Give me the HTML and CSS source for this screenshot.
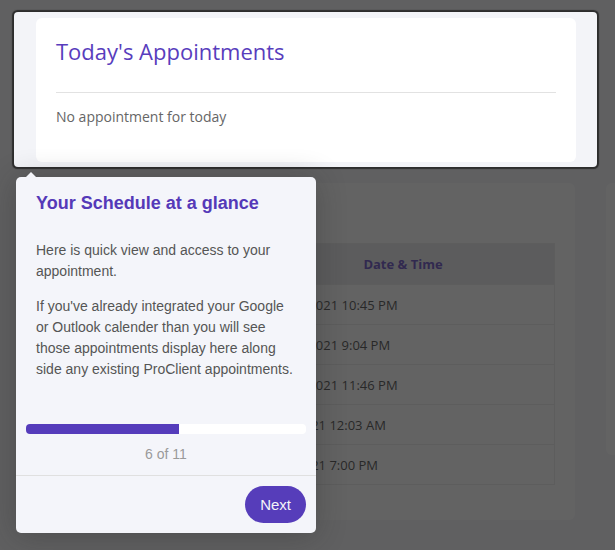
FILE: index.html
```html
<!DOCTYPE html>
<html lang="en">
<head>
    <meta charset="UTF-8">
    <meta name="viewport" content="width=device-width, initial-scale=1.0">
    <title>Dashboard - Appointments</title>
    <link rel="stylesheet" href="styles.css">
</head>
<body>

    <div class="page">
        <section class="today-wrap">
            <div class="card today">
                <h2 class="card-title">Today's Appointments</h2>
                <hr class="divider">
                <p class="empty">No appointment for today</p>
            </div>
        </section>

        <div class="lower">
            <div class="card upcoming">
                <div class="card-head"></div>
                <table class="appt-table">
                    <thead>
                        <tr><th class="col-client"></th><th>Date &amp; Time</th></tr>
                    </thead>
                    <tbody>
                        <tr><td></td><td>Jun 28, 2021 10:45 PM</td></tr>
                        <tr><td></td><td>Jun 29, 2021 9:04 PM</td></tr>
                        <tr><td></td><td>Jun 30, 2021 11:46 PM</td></tr>
                        <tr><td></td><td>Jul 1, 2021 12:03 AM</td></tr>
                        <tr><td></td><td>Jul 2, 2021 7:00 PM</td></tr>
                    </tbody>
                </table>
            </div>
            <div class="card side"></div>
        </div>
    </div>

    <div class="tour-tip">
        <div class="tip-header">
            <h3 class="tip-title">Your Schedule at a glance</h3>
        </div>
        <div class="tip-text">
            <p>Here is quick view and access to your appointment.</p>
            <p>If you've already integrated your Google or Outlook calender than you will see those appointments display here along side any existing ProClient appointments.</p>
        </div>
        <div class="tip-progress"><div class="tip-progress-bar" style="width: 54.55%"></div></div>
        <div class="tip-count">6 of 11</div>
        <div class="tip-buttons">
            <button class="btn-next">Next</button>
        </div>
    </div>

</body>
</html>
```

FILE: styles.css
```css
html, body {
    margin: 0;
}
body {
    background: #f3f4f8;
    font-family: 'Open Sans', sans-serif;
    color: #333;
    height: 550px;
    overflow: hidden;
}
.page {
    padding: 12px 18px 0 14px;
}
.today-wrap {
    position: relative;
    z-index: 2;
    height: 155px;
    box-sizing: border-box;
    padding: 6px 21px 5px 22px;
    background: #f3f4f8;
    border-radius: 4px;
    box-shadow: 0 0 1px 1.5px rgba(33,33,33,0.8), 0 0 0 5000px rgba(33,33,33,0.7);
}
.card {
    background: #fff;
    border-radius: 6px;
}
.today {
    height: 144px;
    box-sizing: border-box;
    padding: 20px 20px 0;
}
.card-title {
    margin: 0;
    font-size: 22px;
    font-weight: 400;
    line-height: 1.2;
    color: #583dbd;
}
.divider {
    border: none;
    border-top: 1px solid #e2e2e2;
    margin: 28px 0 13px;
}
.empty {
    margin: 0;
    font-size: 14px;
    line-height: 21px;
    color: #666;
}
.lower {
    display: flex;
    gap: 31px;
    margin: 16px 0 0 22px;
    width: 800px;
}
.upcoming {
    width: 539px;
    height: 337px;
    box-sizing: border-box;
    padding: 20px;
    flex-shrink: 0;
}
.card-head {
    height: 40px;
}
.side {
    width: 200px;
    height: 272px;
    flex-shrink: 0;
}
.appt-table {
    width: 100%;
    border-collapse: collapse;
    border: 1px solid #ececec;
    font-size: 13px;
}
.appt-table th {
    height: 40px;
    padding: 0;
    background: #e6e6ea;
    color: #583dbd;
    font-weight: 700;
    text-align: center;
}
.appt-table .col-client {
    width: 195px;
}
.appt-table td {
    height: 39px;
    padding: 0 0 0 12px;
    border-top: 1px solid #ececec;
    color: #3a3a3a;
}

/* tour popover */
.tour-tip {
    position: absolute;
    z-index: 3;
    left: 16px;
    top: 177px;
    width: 300px;
    background: #f4f5fa;
    border-radius: 5px;
    box-shadow: 0 3px 30px rgba(33,33,33,0.3);
    font-family: 'Liberation Sans', Arial, sans-serif;
}
.tour-tip::before {
    content: "";
    position: absolute;
    top: -10px;
    left: 10px;
    border: 5px solid transparent;
    border-bottom-color: #f4f5fa;
}
.tip-header {
    padding: 16px 20px 0;
}
.tip-title {
    margin: 0;
    font-size: 18px;
    font-weight: 700;
    line-height: 1.2;
    color: #5539b8;
}
.tip-text {
    padding: 25px 20px 0;
    font-size: 14px;
    line-height: 21px;
    color: #555;
}
.tip-text p {
    margin: 0 0 14px;
}
.tip-text p:last-child {
    margin-bottom: 0;
}
.tip-progress {
    margin: 44px 10px 0;
    height: 10px;
    background: #fff;
    border-radius: 4px;
    overflow: hidden;
}
.tip-progress-bar {
    height: 100%;
    background: #553cbb;
}
.tip-count {
    margin-top: 10px;
    text-align: center;
    font-size: 14px;
    line-height: 21px;
    color: #9a9a9a;
}
.tip-buttons {
    margin-top: 10px;
    border-top: 1px solid #e0e0e0;
    padding: 10px;
    display: flex;
    justify-content: flex-end;
}
.btn-next {
    height: 37px;
    padding: 0 15px;
    border: none;
    border-radius: 19px;
    background: #563dba;
    color: #f4f4f8;
    font-family: 'Liberation Sans', Arial, sans-serif;
    font-size: 15px;
}
```
